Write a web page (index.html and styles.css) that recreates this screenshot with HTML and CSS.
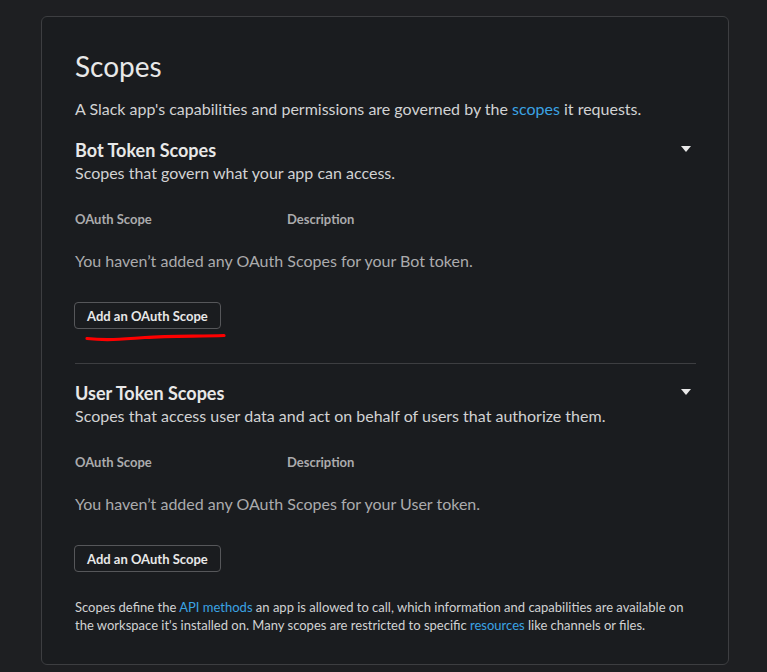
FILE: index.html
```html
<!DOCTYPE html>
<html lang="en">
<head>
<meta charset="utf-8">
<title>Scopes</title>
<link rel="stylesheet" href="styles.css">
</head>
<body>
<div class="card">
  <h2 class="title">Scopes</h2>
  <p class="lead">A Slack app's capabilities and permissions are governed by the <a href="#">scopes</a> it requests.</p>

  <section class="group">
    <div class="group-head">
      <h3 class="group-title">Bot Token Scopes</h3>
      <svg class="caret" width="10" height="6" viewBox="0 0 10 6"><path d="M0 0H10L5 6Z" fill="#e8e8e8"/></svg>
    </div>
    <p class="group-sub">Scopes that govern what your app can access.</p>
    <div class="cols">
      <span>OAuth Scope</span>
      <span>Description</span>
    </div>
    <p class="empty">You haven’t added any OAuth Scopes for your Bot token.</p>
    <button class="btn">Add an OAuth Scope</button>
    <svg class="scribble" width="160" height="10" viewBox="0 0 160 10"><path d="M12 5.5 C 30 7.5, 45 6.5, 70 4.5 C 95 2.5, 125 3.5, 149 2.5" stroke="#ff0000" stroke-width="3.2" fill="none" stroke-linecap="round"/></svg>
  </section>

  <hr class="sep">

  <section class="group">
    <div class="group-head">
      <h3 class="group-title">User Token Scopes</h3>
      <svg class="caret" width="10" height="6" viewBox="0 0 10 6"><path d="M0 0H10L5 6Z" fill="#e8e8e8"/></svg>
    </div>
    <p class="group-sub">Scopes that access user data and act on behalf of users that authorize them.</p>
    <div class="cols">
      <span>OAuth Scope</span>
      <span>Description</span>
    </div>
    <p class="empty">You haven’t added any OAuth Scopes for your User token.</p>
    <button class="btn">Add an OAuth Scope</button>
  </section>

  <p class="foot">Scopes define the <a href="#">API methods</a> an app is allowed to call, which information and capabilities are available on the workspace it's installed on. Many scopes are restricted to specific <a href="#">resources</a> like channels or files.</p>
</div>
</body>
</html>
```

FILE: styles.css
```css
html, body {
  margin: 0;
  padding: 0;
  background: #1e1f22;
}
body {
  font-family: Lato, "Noto Sans", sans-serif;
  color: #d1d2d3;
  padding: 16px 0 0 41px;
  height: 672px;
  box-sizing: border-box;
  overflow: hidden;
}
.card {
  width: 688px;
  box-sizing: border-box;
  background: #1a1c1f;
  border: 1px solid #3d3e41;
  border-radius: 6px;
  padding: 32px 32px 30px 33px;
}
.title {
  margin: 0;
  font-size: 28px;
  line-height: 34px;
  font-weight: 400;
  color: #e8e8e8;
}
.lead {
  margin: 15px 0 0;
  font-size: 16px;
  line-height: 22px;
}
a {
  color: #3aa3e3;
  text-decoration: none;
}
.group {
  display: flex;
  flex-direction: column;
  align-items: flex-start;
  margin-top: 18px;
}
.group-head {
  display: flex;
  align-items: center;
  justify-content: space-between;
  align-self: stretch;
}
.group-title {
  margin: 0;
  font-size: 18px;
  line-height: 24px;
  font-weight: 700;
  color: #e8e8e8;
}
.caret {
  margin-right: 5px;
  margin-top: -3px;
}
.group-sub {
  margin: 0;
  font-size: 16px;
  line-height: 22px;
}
.cols {
  display: grid;
  grid-template-columns: 212px 1fr;
  align-self: stretch;
  margin-top: 26px;
  font-size: 13px;
  line-height: 18px;
  font-weight: 700;
  color: #ababad;
}
.empty {
  margin: 22px 0 0;
  font-size: 16px;
  line-height: 22px;
  color: #ababad;
}
.btn {
  margin-top: 30px;
  margin-left: -1px;
  height: 27px;
  padding: 0 12px;
  background: transparent;
  border: 1px solid #56575a;
  border-radius: 4px;
  font-family: inherit;
  font-size: 13px;
  font-weight: 700;
  color: #e8e8e8;
  cursor: pointer;
}
.scribble {
  display: block;
  margin-top: 4px;
}
.sep {
  margin: 20px 0 0;
  border: 0;
  border-top: 1px solid #3d3e41;
  height: 0;
}
.sep + .group {
  margin-top: 17px;
}
.foot {
  margin: 26px 0 0;
  font-size: 13px;
  line-height: 18px;
}
```
